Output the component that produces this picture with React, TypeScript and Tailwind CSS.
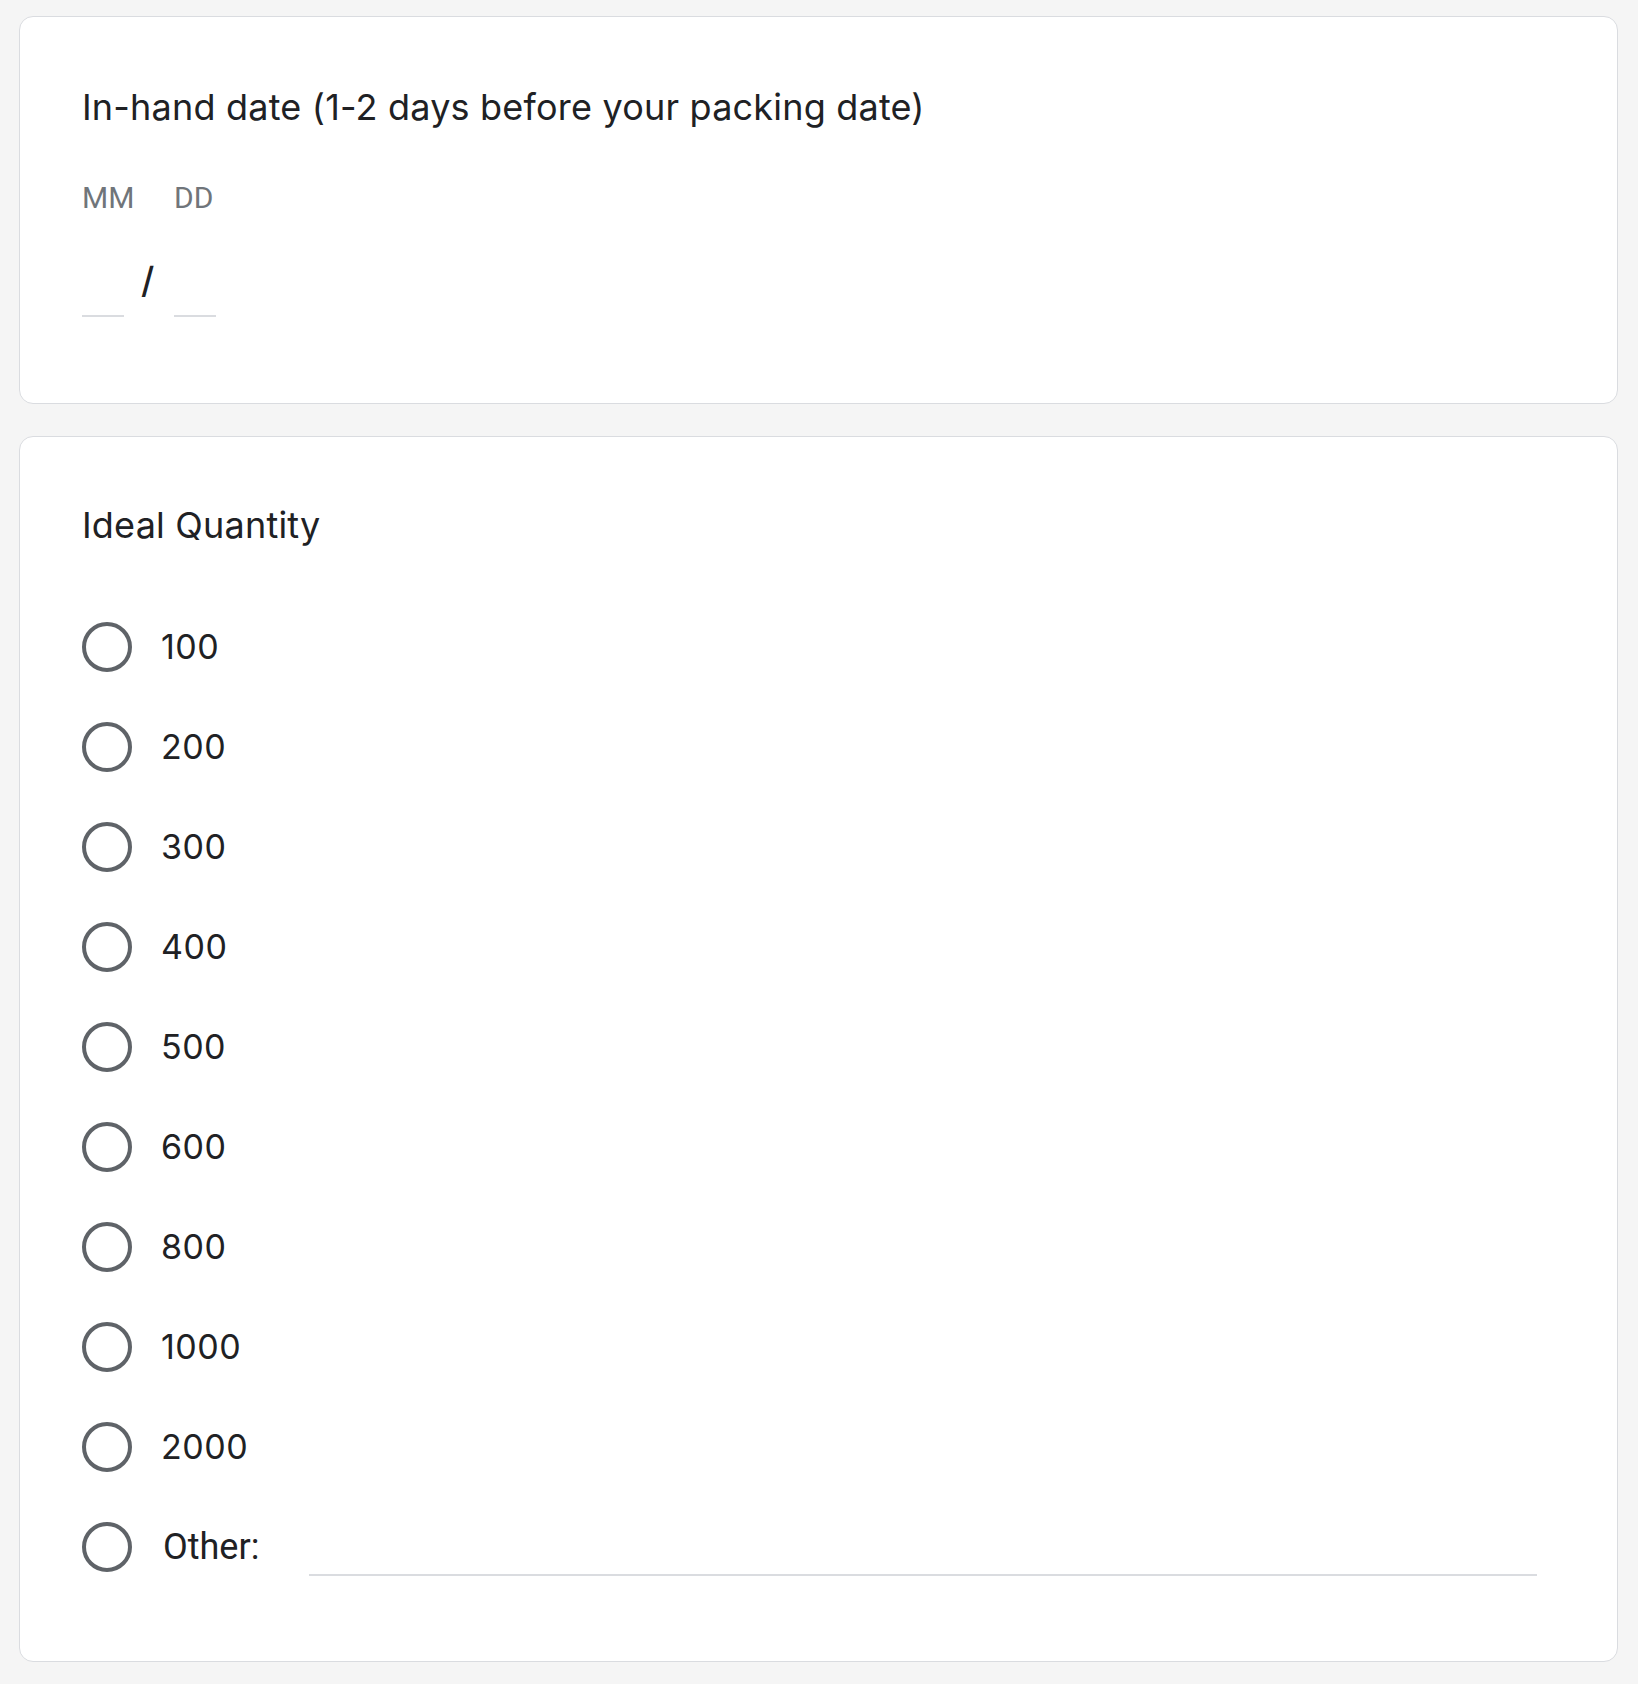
import React from 'react'

const OPTIONS = ['100', '200', '300', '400', '500', '600', '800', '1000', '2000']

const titleFont = { fontFamily: 'Inter, Lato, sans-serif' }
const robotoFont = { fontFamily: 'Roboto, "Liberation Sans", sans-serif' }

function Radio() {
  return <div className="h-[50px] w-[50px] shrink-0 rounded-full border-[4px] border-[#5f6368]" />
}

function Card({ children, className = '' }: { children: React.ReactNode; className?: string }) {
  return (
    <div className={`rounded-[14px] border border-[#dadce0] bg-white pl-[62px] pr-[62px] ${className}`}>
      {children}
    </div>
  )
}

export default function App() {
  return (
    <div className="min-h-screen bg-[#f5f5f5] pl-[19px] pr-[20px] pt-[16px]">
      {/* Date question */}
      <Card className="pt-[72px] pb-[86px]">
        <div className="text-[36px] leading-[36px] tracking-[0.2px] text-[#202124]" style={titleFont}>
          In-hand date (1-2 days before your packing date)
        </div>

        <div className="mt-[59px] flex items-end" style={robotoFont}>
          <div className="w-[51px]">
            <div className="text-[30px] leading-[28px] text-[#70757a]">MM</div>
            <div className="mt-[51px] h-[54px] w-[42px] border-b-2 border-[#dadce0]" />
          </div>
          <div
            className="w-[41px] pb-[19px] pl-[8px] text-[36px] font-medium leading-[36px] text-[#202124]"
            style={titleFont}
          >
            /
          </div>
          <div>
            <div className="text-[30px] leading-[28px] text-[#70757a]">DD</div>
            <div className="mt-[51px] h-[54px] w-[42px] border-b-2 border-[#dadce0]" />
          </div>
        </div>
      </Card>

      {/* Quantity question */}
      <Card className="mt-[32px] pt-[70px] pb-[64px]">
        <div className="text-[36px] leading-[36px] tracking-[0.2px] text-[#202124]" style={titleFont}>
          Ideal Quantity
        </div>

        <div className="mt-[54px]">
          {OPTIONS.map((opt) => (
            <label key={opt} className="flex h-[100px] items-center">
              <Radio />
              <span className="ml-[29px] text-[34px] leading-[36px] tracking-[0.5px] text-[#202124]" style={titleFont}>
                {opt}
              </span>
            </label>
          ))}
          <div className="flex h-[100px] items-center">
            <Radio />
            <span className="ml-[31px] text-[36px] leading-[36px] text-[#202124]" style={robotoFont}>
              Other:
            </span>
            <div className="ml-[50px] mr-[18px] h-[58px] flex-1 border-b-2 border-[#dadce0]" />
          </div>
        </div>
      </Card>
    </div>
  )
}
